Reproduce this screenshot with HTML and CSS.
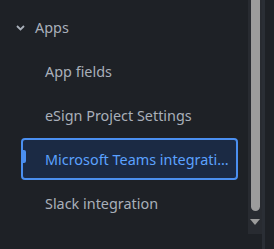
FILE: index.html
```html
<!DOCTYPE html>
<html lang="en">
<head>
  <meta charset="UTF-8" />
  <title>Settings nav</title>
  <link rel="stylesheet" href="styles.css">
</head>
<body>
  <div class="panel">
    <nav class="nav">
      <div class="group-head">
        <svg class="chev" width="9" height="6" viewBox="0 0 9 6"><path d="M1 1 L4.5 4.5 L8 1" fill="none" stroke="currentColor" stroke-width="1.8"/></svg>
        <span>Apps</span>
      </div>
      <a class="item" href="#">App fields</a>
      <a class="item" href="#">eSign Project Settings</a>
      <a class="item active" href="#">Microsoft Teams integration</a>
      <a class="item" href="#">Slack integration</a>
    </nav>
    <div class="scroll">
      <div class="thumb"></div>
      <div class="arrow"></div>
    </div>
    <div class="edge"></div>
  </div>
</body>
</html>
```

FILE: styles.css
```css
:root{
  --bg:#1e2126;
  --text:#a9b0ba;
  --blue:#4b8ff0;
  --blue-text:#5ba2ff;
  --sel-bg:#1b2a44;
  --track:#282b31;
  --thumb:#9c9c9c;
}
*{box-sizing:border-box}
html,body{margin:0;height:100%}
body{background:var(--bg);font-family:'Noto Sans',sans-serif;font-size:14.4px;color:var(--text);overflow:hidden}
.panel{display:flex;height:249px}
.nav{width:248px;padding:6px 10px 0 21px}
.group-head{height:42px;margin:0 0 2px -5px;display:flex;align-items:center;gap:10px}
.chev{color:var(--text);margin-top:1px}
.item{display:block;position:relative;height:42px;line-height:39px;margin-bottom:2px;padding:0 3px 0 22px;border:2px solid transparent;border-radius:4px;color:var(--text);text-decoration:none;white-space:nowrap;overflow:hidden;text-overflow:ellipsis}
.item.active{background:var(--sel-bg);border-color:var(--blue);color:var(--blue-text)}
.item.active::before{content:"";position:absolute;left:0;top:10px;width:3px;height:13px;border-radius:0 2px 2px 0;background:var(--blue)}
.scroll{width:14px;height:234px;background:var(--track);position:relative}
.thumb{position:absolute;left:3px;top:0;width:9px;height:211px;background:var(--thumb);border-radius:0 0 5px 5px}
.arrow{position:absolute;left:2px;top:219px;width:0;height:0;border-left:5px solid transparent;border-right:5px solid transparent;border-top:6px solid var(--thumb)}
.edge{width:3px;height:249px;background:#2a2e35}
```
